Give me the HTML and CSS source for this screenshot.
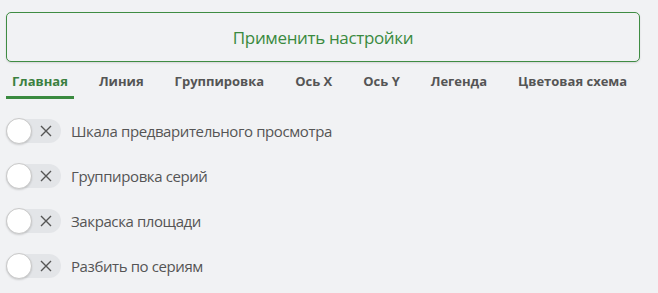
FILE: index.html
```html
<html>
<head>
    <title>Настройки</title>
    <link rel="stylesheet" href="styles.css">
</head>
<body>
    <div class="panel">
        <button class="apply">Применить настройки</button>

        <div class="tabs">
            <div class="tab active">Главная</div>
            <div class="tab">Линия</div>
            <div class="tab">Группировка</div>
            <div class="tab">Ось X</div>
            <div class="tab">Ось Y</div>
            <div class="tab">Легенда</div>
            <div class="tab">Цветовая схема</div>
        </div>

        <div class="options">
            <label class="option">
                <span class="switch">
                    <span class="knob"></span>
                    <svg class="cross" width="12" height="12" viewBox="0 0 12 12"><path d="M1 1L11 11M11 1L1 11"/></svg>
                </span>
                <span class="option-name">Шкала предварительного просмотра</span>
            </label>
            <label class="option">
                <span class="switch">
                    <span class="knob"></span>
                    <svg class="cross" width="12" height="12" viewBox="0 0 12 12"><path d="M1 1L11 11M11 1L1 11"/></svg>
                </span>
                <span class="option-name">Группировка серий</span>
            </label>
            <label class="option">
                <span class="switch">
                    <span class="knob"></span>
                    <svg class="cross" width="12" height="12" viewBox="0 0 12 12"><path d="M1 1L11 11M11 1L1 11"/></svg>
                </span>
                <span class="option-name">Закраска площади</span>
            </label>
            <label class="option">
                <span class="switch">
                    <span class="knob"></span>
                    <svg class="cross" width="12" height="12" viewBox="0 0 12 12"><path d="M1 1L11 11M11 1L1 11"/></svg>
                </span>
                <span class="option-name">Разбить по сериям</span>
            </label>
        </div>
    </div>
</body>
</html>
```

FILE: styles.css
```css
body {
    margin: 0;
    padding: 12px 6px;
    background: #f1f2f4;
    font-family: "Open Sans", "Noto Sans", sans-serif;
    color: #555;
}

.panel {
    width: 634px;
}

.apply {
    display: block;
    width: 100%;
    height: 50px;
    background: #f1f2f4;
    border: 1px solid #3f8c43;
    border-radius: 5px;
    color: #3a8a3f;
    font-family: "Open Sans", "Noto Sans", sans-serif;
    font-size: 17px;
    letter-spacing: -0.35px;
    box-shadow: 0 1px 2px rgba(0, 0, 0, 0.12);
    cursor: pointer;
}

.tabs {
    display: flex;
    gap: 19px;
    margin-top: 3px;
}

.tab {
    padding: 7px 6px 6px 6px;
    font-size: 13px;
    line-height: 18px;
    font-weight: 700;
    color: #555;
    border-bottom: 3px solid transparent;
    white-space: nowrap;
}

.tab.active {
    color: #3b8040;
    border-bottom-color: #3a8a3f;
}

.options {
    display: flex;
    flex-direction: column;
    gap: 20px;
    margin-top: 19px;
}

.option {
    display: flex;
    align-items: center;
    gap: 10px;
    height: 25px;
}

.switch {
    display: flex;
    align-items: center;
    width: 55px;
    height: 24px;
    border-radius: 12px;
    background: #e3e5e8;
}

.knob {
    box-sizing: border-box;
    flex-shrink: 0;
    width: 26px;
    height: 26px;
    border-radius: 50%;
    background: #fff;
    border: 1px solid #c9c9c9;
    box-shadow: 0 1px 2px rgba(0, 0, 0, 0.15);
}

.cross {
    margin-left: 8px;
}

.cross path {
    stroke: #555;
    stroke-width: 1.4;
    fill: none;
}

.option-name {
    font-size: 15px;
    letter-spacing: -0.4px;
    color: #555;
}
```
